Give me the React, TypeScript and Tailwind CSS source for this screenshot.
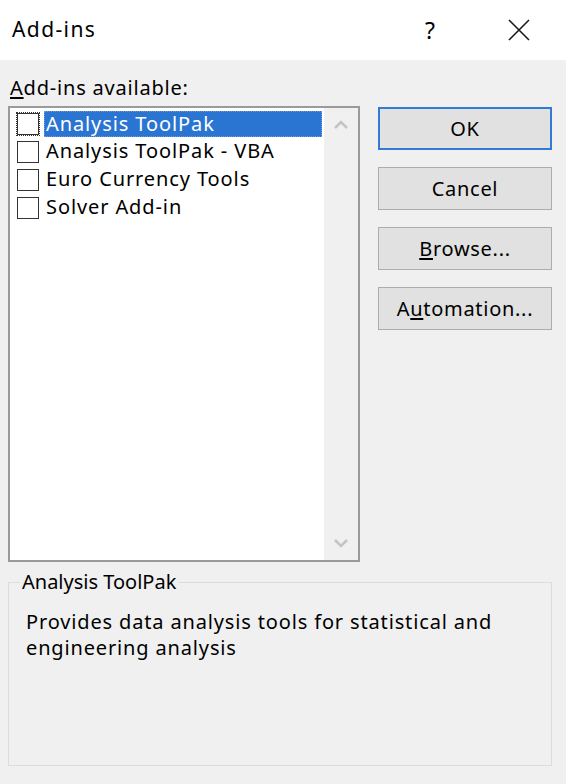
import { useState } from 'react';

const items = ['Analysis ToolPak', 'Analysis ToolPak - VBA', 'Euro Currency Tools', 'Solver Add-in'];

function Btn({ children, primary }: { children: React.ReactNode; primary?: boolean }) {
  return (
    <button
      className={
        primary
          ? 'h-[43px] w-[174px] bg-[#e1e1e1] border-2 border-[#2f7bd6] text-[20px] tracking-[0.7px] text-black'
          : 'h-[43px] w-[174px] bg-[#e1e1e1] border border-[#adadad] text-[20px] tracking-[0.7px] text-black'
      }
    >
      {children}
    </button>
  );
}

export default function App() {
  const [sel, setSel] = useState(0);
  const [checked, setChecked] = useState<boolean[]>([false, false, false, false]);

  return (
    <div className="w-[566px] h-[784px] bg-[#f0f0f0] text-black overflow-hidden" style={{ fontFamily: '"Noto Sans", "Open Sans", sans-serif' }}>
      <div className="h-[60px] bg-white flex items-center pl-[12px]">
        <span className="text-[21px] tracking-[1.4px] flex-1">Add-ins</span>
        <span className="text-[23px] w-[20px] text-center mr-[68px]">?</span>
        <svg width="22" height="22" viewBox="0 0 22 22" className="mr-[36px]">
          <path d="M1 1L21 21M21 1L1 21" stroke="#1a1a1a" strokeWidth="1.6" />
        </svg>
      </div>

      <div className="pl-[8px] pt-[14px]">
        <div className="text-[20px] tracking-[0.8px] leading-[28px] pl-[2px]">
          <span className="underline underline-offset-2">A</span>dd-ins available:
        </div>
        <div className="flex mt-[4px]">
          <div className="w-[352px] h-[456px] border-2 border-[#9a9a9a] bg-white flex">
            <div className="flex-1 pt-[2px] pl-[6px]">
              {items.map((t, i) => (
                <div key={t} className="flex items-center h-[28px] cursor-default" onClick={() => setSel(i)}>
                  <div
                    className={
                      i === 0
                        ? 'w-[24px] h-[24px] border border-dotted border-[#333] flex items-center justify-center'
                        : 'w-[24px] h-[24px] flex items-center justify-center'
                    }
                    onClick={() => setChecked(checked.map((c, j) => (j === i ? !c : c)))}
                  >
                    <div className="w-[22px] h-[22px] border border-[#333] bg-white text-[14px] leading-[20px] text-center">
                      {checked[i] ? '✓' : ''}
                    </div>
                  </div>
                  <div
                    className={
                      sel === i
                        ? 'ml-[4px] w-[278px] h-[26px] bg-[#2a74d2] text-white border border-dotted border-[#6a9be0] text-[20px] tracking-[0.9px] leading-[24px] pl-[1px] whitespace-nowrap'
                        : 'ml-[4px] h-[26px] text-[20px] tracking-[0.9px] leading-[24px] pl-[2px] whitespace-nowrap'
                    }
                  >
                    {t}
                  </div>
                </div>
              ))}
            </div>
            <div className="w-[34px] bg-[#f0f0f0] flex flex-col items-center justify-between py-[12px]">
              <svg width="16" height="10" viewBox="0 0 16 10">
                <path d="M2 8L8 2L14 8" stroke="#c4c4c4" strokeWidth="2.5" fill="none" />
              </svg>
              <svg width="16" height="10" viewBox="0 0 16 10">
                <path d="M2 2L8 8L14 2" stroke="#c4c4c4" strokeWidth="2.5" fill="none" />
              </svg>
            </div>
          </div>
          <div className="ml-[18px] flex flex-col gap-[17px] mt-[1px]">
            <Btn primary>OK</Btn>
            <Btn>Cancel</Btn>
            <Btn>
              <span className="underline underline-offset-2">B</span>rowse...
            </Btn>
            <Btn>
              A<span className="underline underline-offset-2">u</span>tomation...
            </Btn>
          </div>
        </div>

        <fieldset className="mt-[8px] w-[544px] h-[196px] border border-[#dcdcdc] pl-[17px] pr-[30px]">
          <legend className="text-[20px] leading-[24px] ml-[-6px] px-[2px]">Analysis ToolPak</legend>
          <p className="text-[20px] tracking-[0.85px] leading-[26px] mt-[15px]">
            Provides data analysis tools for statistical and engineering analysis
          </p>
        </fieldset>
      </div>
    </div>
  );
}
